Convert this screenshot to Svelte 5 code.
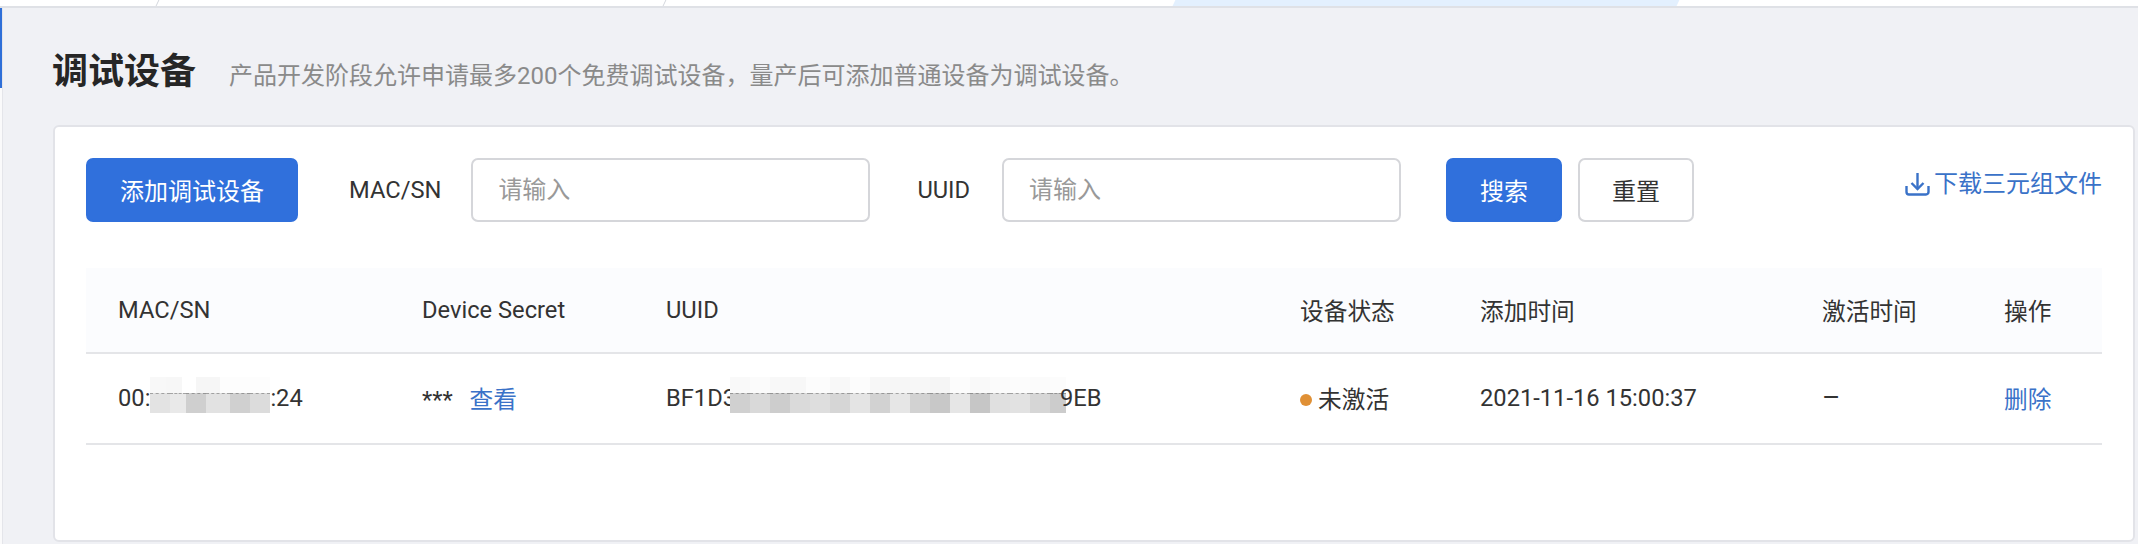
<script lang="ts">
  const columns = ['MAC/SN', 'Device Secret', 'UUID', '设备状态', '添加时间', '激活时间', '操作']

  // blurred-out parts of the ids: [width, colour]
  const macTop = [[16, '#f8f8f8'], [16, '#f7f7f7'], [14, '#fff'], [24, '#f6f6f6'], [50, '#fdfdfd']]
  const macCells = [[20, '#e3e3e3'], [16, '#e9e9e9'], [20, '#cfcfcf'], [24, '#e2e2e2'], [20, '#d0d0d0'], [20, '#dcdcdc']]
  const uuidTop = [
    [20, '#f9f9f9'], [20, '#fbfbfb'], [20, '#f8f8f8'], [16, '#f7f7f7'], [24, '#fcfcfc'], [20, '#f8f8f8'],
    [20, '#fcfcfc'], [20, '#f7f7f7'], [20, '#f6f6f6'], [20, '#f7f7f7'], [20, '#f5f5f5'], [20, '#fcfcfc'],
    [20, '#f9f9f9'], [20, '#fbfbfb'], [20, '#fcfcfc'], [20, '#fbfbfb'], [16, '#fcfcfc'],
  ]
  const uuidCells = [
    [20, '#d0d0d0'], [20, '#d9d9d9'], [20, '#cdcdcd'], [20, '#dadada'], [20, '#dedede'], [20, '#d6d6d6'],
    [20, '#e4e4e4'], [20, '#d2d2d2'], [20, '#e6e6e6'], [20, '#d2d2d2'], [20, '#c8c8c8'], [20, '#e6e6e6'],
    [20, '#c6c6c6'], [20, '#e0e0e0'], [20, '#e2e2e2'], [20, '#d6d6d6'], [16, '#cccccc'],
  ]
</script>

{#snippet mask(width, top, cells, overlap)}
  <span class="mask" style={`width: ${width}px; margin-inline: ${overlap}px`}>
    <span class="mask-row faint">
      {#each top as [w, c]}
        <i style={`width: ${w}px; background: ${c}`}></i>
      {/each}
    </span>
    <span class="mask-row main">
      {#each cells as [w, c]}
        <i style={`width: ${w}px; background: ${c}`}></i>
      {/each}
    </span>
  </span>
{/snippet}

<div class="page">
  <div class="tabs">
    <div class="tab" style="width: 157px"></div>
    <div class="tab" style="width: 506px"></div>
    <div class="tab plain" style="width: 509px"></div>
    <div class="tab active" style="width: 504px"></div>
  </div>

  <div class="body">
    <div class="rail"><span class="rail-mark"></span></div>

    <main class="content">
      <header class="heading">
        <h1>调试设备</h1>
        <p>产品开发阶段允许申请最多200个免费调试设备，量产后可添加普通设备为调试设备。</p>
      </header>

      <section class="card">
        <div class="toolbar">
          <button class="btn primary add">添加调试设备</button>
          <label class="label mac" for="mac">MAC/SN</label>
          <input id="mac" class="field" placeholder="请输入" />
          <label class="label uuid" for="uuid">UUID</label>
          <input id="uuid" class="field" placeholder="请输入" />
          <button class="btn primary search">搜索</button>
          <button class="btn">重置</button>
          <a class="download" href="#top">
            <svg width="25" height="24" viewBox="0 0 25 24" fill="none" stroke="currentColor" stroke-width="2.4">
              <path d="M12.5 1v16" />
              <path d="M6.5 11l6 6 6-6" />
              <path d="M1.5 14v6a2.5 2.5 0 0 0 2.5 2.5h17a2.5 2.5 0 0 0 2.5-2.5v-6" />
            </svg>
            下载三元组文件
          </a>
        </div>

        <div class="table">
          <div class="row head">
            {#each columns as col}
              <div>{col}</div>
            {/each}
          </div>
          <div class="row">
            <div>00:{@render mask(120, macTop, macCells, 0)}:24</div>
            <div>*** <a class="link secret" href="#top">查看</a></div>
            <div>BF1D3{@render mask(336, uuidTop, uuidCells, -6)}9EB</div>
            <div class="status"><span class="dot"></span>未激活</div>
            <div>2021-11-16 15:00:37</div>
            <div class="dash">–</div>
            <div><a class="link" href="#top">删除</a></div>
          </div>
        </div>
      </section>
    </main>
  </div>
</div>

<style>
  :global(body) {
    margin: 0;
    background: #f0f1f5;
  }

  .page {
    height: 544px;
    overflow: hidden;
    display: flex;
    flex-direction: column;
    font-family: Roboto, "Noto Sans CJK SC", sans-serif;
    font-size: 23.7px;
    color: #333;
  }

  .tabs {
    flex: none;
    display: flex;
    height: 6px;
    background: #fff;
    border-bottom: 2px solid #dfe1e6;
    overflow: hidden;
  }
  .tab {
    flex: none;
    border-right: 1px solid #d4d7dd;
    transform: skewX(-25deg);
  }
  .tab.plain { border-right: none; }
  .tab.active {
    background: #e3f0fe;
    border-right: none;
  }

  .body {
    flex: 1;
    display: flex;
    min-height: 0;
  }

  .rail {
    flex: none;
    width: 3px;
    background: #fafafb;
    border-right: 1px solid #e4e5ea;
    box-sizing: border-box;
  }
  .rail-mark {
    display: block;
    width: 2px;
    height: 80px;
    background: #2f6fd8;
  }

  .content {
    flex: 1;
    min-width: 0;
    display: flex;
    flex-direction: column;
    padding: 38px 3px 2px 50px;
  }

  .heading {
    flex: none;
    display: flex;
    align-items: baseline;
    gap: 33px;
    height: 52px;
    margin-bottom: 27px;
  }
  h1 {
    margin: 0 0 0 -1px;
    font-size: 36px;
    line-height: 52px;
    font-weight: 700;
    color: #262626;
  }
  .heading p {
    margin: 0;
    font-size: 24px;
    color: #8a8a8a;
  }

  .card {
    flex: 1;
    min-height: 0;
    box-sizing: border-box;
    background: #fff;
    border: 2px solid #e2e3e8;
    border-radius: 6px;
    padding: 31px 31px 0 31px;
  }

  .toolbar {
    display: flex;
    align-items: stretch;
    height: 64px;
  }
  .label {
    align-self: center;
  }
  .label.mac { margin: 0 30px 0 51px; }
  .label.uuid { margin: 0 32px 0 47px; }

  .field {
    width: 399px;
    box-sizing: border-box;
    border: 2px solid #d5d6da;
    border-radius: 7px;
    padding: 0 25px;
    font: inherit;
    font-size: 24px;
    color: #333;
    background: #fff;
    outline: none;
  }
  .field::placeholder { color: #999; }

  .btn {
    width: 116px;
    box-sizing: border-box;
    border: 2px solid #d5d6da;
    border-radius: 7px;
    background: #fff;
    color: #333;
    font: inherit;
    font-size: 24px;
    padding: 0 0 2px;
    margin-left: 16px;
  }
  .btn.primary {
    background: #3070dc;
    border-color: #3070dc;
    color: #fff;
  }
  .btn.add {
    width: 212px;
    margin-left: 0;
  }
  .btn.search { margin-left: 45px; }

  .download {
    margin-left: auto;
    align-self: flex-start;
    display: flex;
    align-items: center;
    gap: 4px;
    margin-top: 6px;
    font-size: 24px;
    color: #3a72c8;
    text-decoration: none;
  }
  .download svg { margin-top: 5px; }

  .table { margin-top: 46px; }

  .row {
    display: grid;
    grid-template-columns: 304px 244px 634px 180px 342px 182px 1fr;
    align-items: center;
    box-sizing: border-box;
    height: 91px;
    padding: 0 0 2px 32px;
    border-bottom: 2px solid #e4e5e8;
    white-space: nowrap;
  }
  .row.head {
    height: 86px;
    padding-bottom: 0;
    background: #fbfcfe;
  }

  .link {
    color: #3a72c8;
    text-decoration: none;
  }
  .secret { margin-left: 11px; }

  .status {
    display: flex;
    align-items: center;
  }
  .dot {
    width: 12px;
    height: 12px;
    border-radius: 50%;
    background: #e09035;
    margin: 5px 6px 0 0;
  }
  .dash { font-size: 28px; }

  .mask {
    display: inline-block;
    height: 36px;
    vertical-align: middle;
    margin-block: -19px -11px;
  }
  .mask-row {
    display: flex;
    height: 20px;
  }
  .mask-row.faint { height: 16px; }
  .mask-row i {
    display: block;
    flex: none;
    height: 100%;
  }
  .mask-row.main i {
    box-sizing: border-box;
    border-top: 1px dashed rgba(80, 80, 80, 0.45);
  }
</style>
